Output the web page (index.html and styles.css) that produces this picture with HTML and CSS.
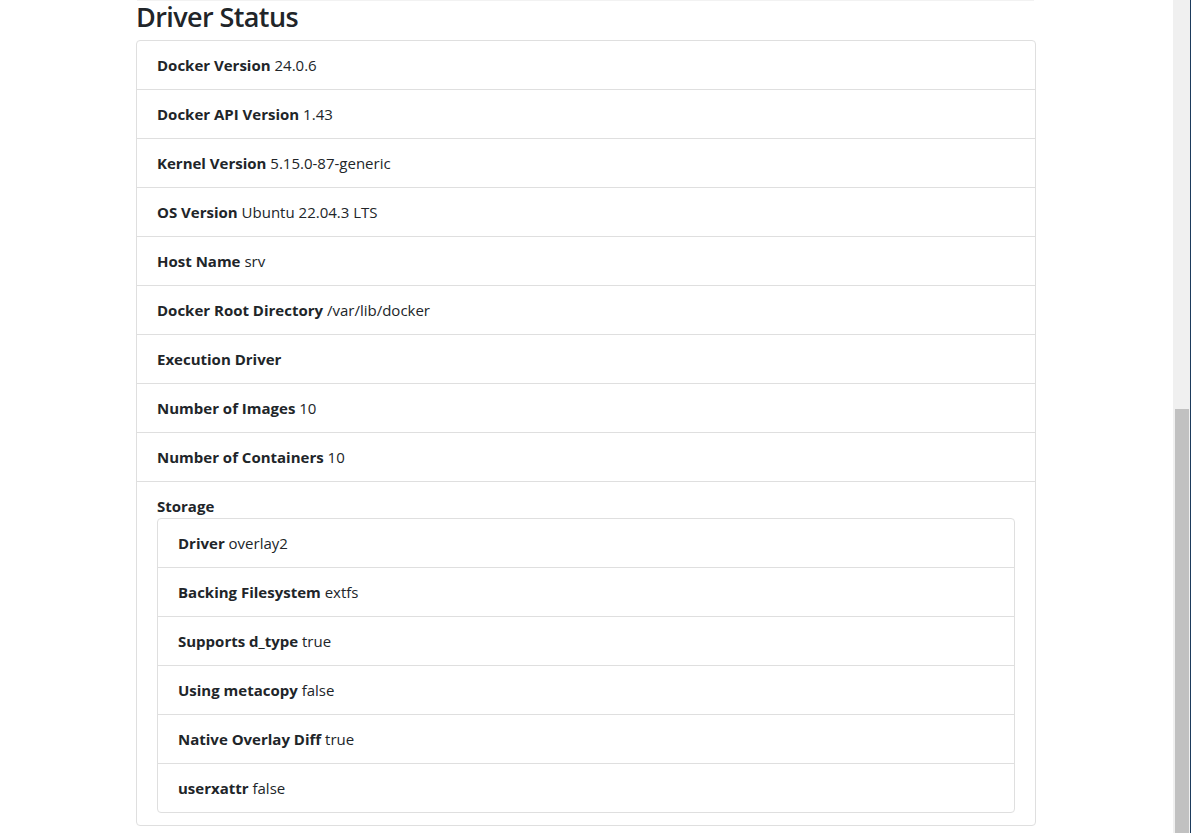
FILE: index.html
```html
<!DOCTYPE html>
<html lang="en">
<head>
<meta charset="utf-8">
<title>Driver Status</title>
<link rel="stylesheet" href="styles.css">
</head>
<body>
<div class="page">
  <main class="main">
    <div class="topline"></div>
    <h3 class="title">Driver Status</h3>
    <ul class="list card">
      <li class="item"><b>Docker Version</b> 24.0.6</li>
      <li class="item"><b>Docker API Version</b> 1.43</li>
      <li class="item"><b>Kernel Version</b> 5.15.0-87-generic</li>
      <li class="item"><b>OS Version</b> Ubuntu 22.04.3 LTS</li>
      <li class="item"><b>Host Name</b> srv</li>
      <li class="item"><b>Docker Root Directory</b> /var/lib/docker</li>
      <li class="item"><b>Execution Driver</b></li>
      <li class="item"><b>Number of Images</b> 10</li>
      <li class="item"><b>Number of Containers</b> 10</li>
      <li class="item"><b>Storage</b>
        <ul class="list card">
          <li class="item"><b>Driver</b> overlay2</li>
          <li class="item"><b>Backing Filesystem</b> extfs</li>
          <li class="item"><b>Supports d_type</b> true</li>
          <li class="item"><b>Using metacopy</b> false</li>
          <li class="item"><b>Native Overlay Diff</b> true</li>
          <li class="item"><b>userxattr</b> false</li>
        </ul>
      </li>
    </ul>
  </main>
  <aside class="scrollbar"><div class="thumb"></div></aside>
</div>
</body>
</html>
```
FILE: styles.css
```css
html, body {
  margin: 0;
  padding: 0;
  height: 100%;
  overflow: hidden;
  background: #fff;
}
body {
  font-family: "Open Sans", "Noto Sans", sans-serif;
  font-size: 15px;
  line-height: 24px;
  color: #212529;
}
.page {
  display: flex;
  height: 833px;
}
.main {
  flex: 1;
  padding-left: 136px;
  padding-right: 137px;
}
.topline {
  height: 1px;
  background: #f2f2f2;
  margin: 0 2px 0 1px;
}
.title {
  margin: 0 0 8px;
  font-size: 27px;
  font-weight: 600;
  line-height: 30px;
  padding-top: 1px;
  letter-spacing: -0.6px;
}
.list {
  list-style: none;
  margin: 0;
  padding: 0;
}
.card {
  border: 1px solid #dfdfdf;
  border-radius: 4px;
}
.item {
  padding: 12px 20px;
  border-top: 1px solid #dfdfdf;
}
.item:first-child {
  border-top: none;
}
.item b {
  font-weight: 700;
}
.scrollbar {
  box-sizing: border-box;
  width: 18px;
  flex: none;
  background: #f0f0f0;
  border-right: 1px solid #1b3a5c;
  display: flex;
  flex-direction: column;
  justify-content: flex-end;
  padding: 0 1px 0 2px;
}
.thumb {
  height: 424px;
  background: #c1c1c1;
}
```
